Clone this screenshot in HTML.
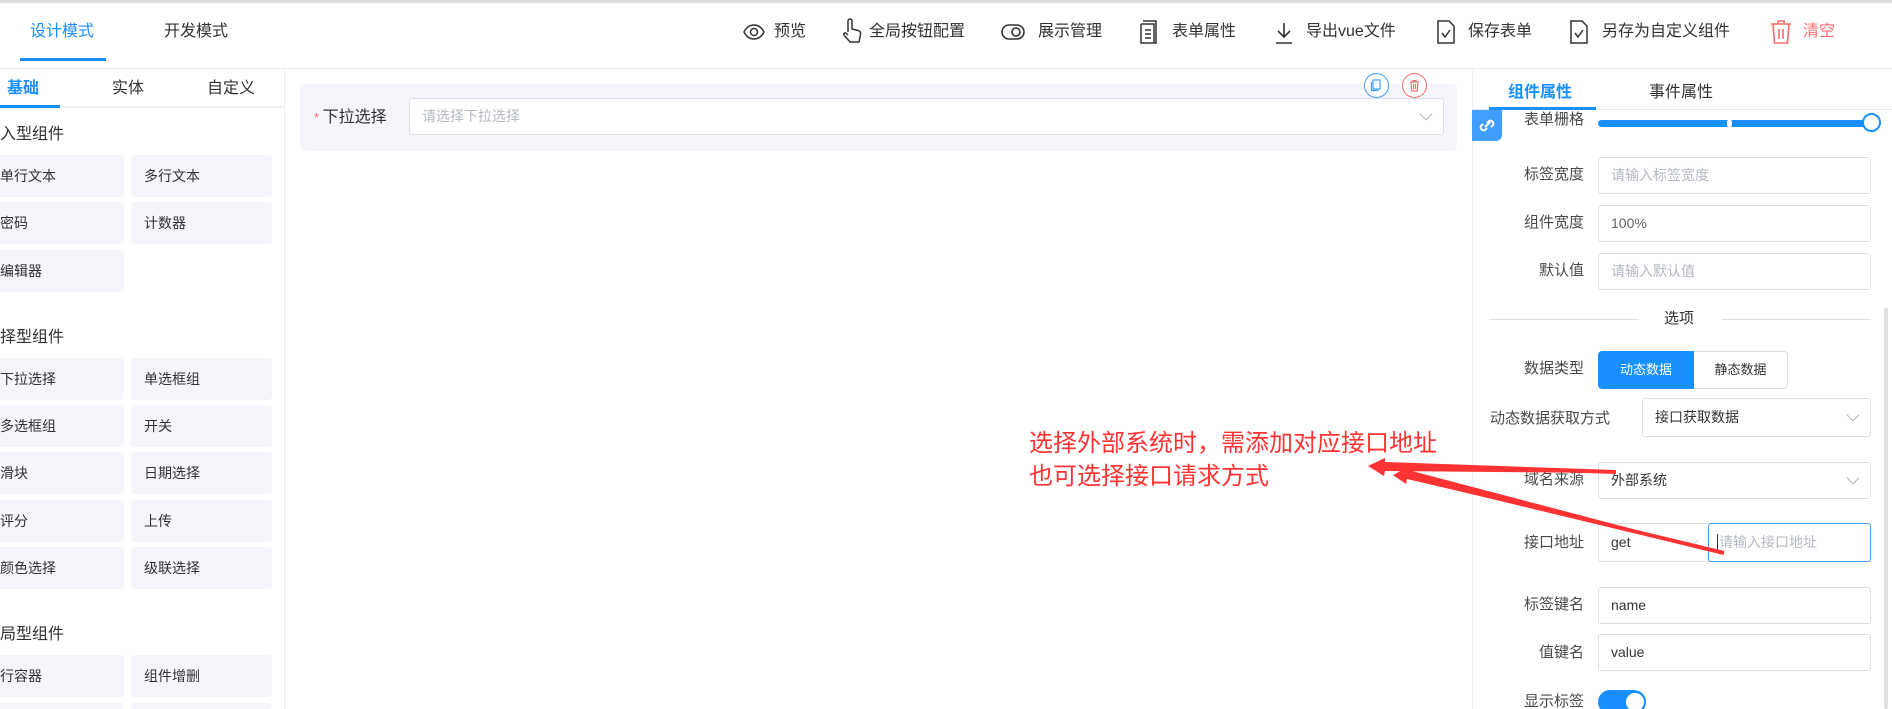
<!DOCTYPE html>
<html><head><meta charset="utf-8"><style>
*{box-sizing:border-box;margin:0;padding:0}
html,body{width:1892px;height:709px;overflow:hidden}
body{background:#fff;font-family:"Liberation Sans","Noto Sans CJK SC",sans-serif;color:#303133}
#w{position:relative;width:1892px;height:709px;overflow:hidden}
.a{position:absolute;white-space:nowrap}
.tb{font-size:16px;color:#303133;top:20px;line-height:24px}
.ic{position:absolute;top:21px}
.item{position:absolute;background:#f5f6fc;border-radius:4px;height:42px;font-size:14px;color:#303133;line-height:42px}
.h{font-size:16px;color:#303133;line-height:20px}
.inp{position:absolute;border:1px solid #dcdfe6;border-radius:3px;height:37px;font-size:14px;line-height:35px;padding-left:12px;color:#606266;background:#fff}
.ph{color:#b4b8c2}
.lbl{position:absolute;font-size:15px;color:#4a4a4a;text-align:right;width:120px;line-height:20px}
.arr{position:absolute;right:12px;top:9px;width:10px;height:10px;border-right:1px solid #aaa;border-bottom:1px solid #aaa;transform:rotate(45deg) scale(.9,.9)}
</style></head><body><div id="w">
<div class="a" style="left:0;top:0;width:1892px;height:3px;background:#dcdcdc"></div>
<div class="a" style="left:0;top:68px;width:1892px;height:1px;background:#e6e6e6"></div>
<div class="a" style="left:30px;top:20px;font-size:16px;color:#1890ff;line-height:24px">设计模式</div>
<div class="a" style="left:20px;top:58px;width:86px;height:3px;background:#1890ff"></div>
<div class="a" style="left:164px;top:20px;font-size:16px;line-height:24px">开发模式</div>

<svg class="ic" style="left:743px" width="22" height="22" viewBox="0 0 22 22" fill="none" stroke="#333" stroke-width="1.5"><path d="M1 11C4 5 8 4 11 4s7 1 10 7c-3 6-7 7-10 7S4 17 1 11z"/><circle cx="11" cy="11" r="3.5"/></svg>
<div class="a tb" style="left:774px">预览</div>
<svg class="ic" style="left:842px;top:18px" width="20" height="26" viewBox="0 0 20 26" fill="none" stroke="#333" stroke-width="1.5"><path d="M6 14V3a2 2 0 014 0v8l6 1.5c2 .5 3 2 2.5 4L17 24H8L2 17c-1-1.5 1-3 2.5-1.5L6 17"/></svg>
<div class="a tb" style="left:869px">全局按钮配置</div>
<svg class="ic" style="left:1001px" width="24" height="22" viewBox="0 0 24 22" fill="none" stroke="#333" stroke-width="1.6"><rect x="1" y="4" width="22" height="14" rx="7"/><circle cx="15" cy="11" r="4"/></svg>
<div class="a tb" style="left:1038px">展示管理</div>
<svg class="ic" style="left:1139px;top:19px" width="20" height="26" viewBox="0 0 20 26" fill="none" stroke="#333" stroke-width="1.5"><path d="M4 2h13v22H2V5"/><path d="M2 5h13v19"/><path d="M6 11h6M6 15h6M6 19h6"/></svg>
<div class="a tb" style="left:1172px">表单属性</div>
<svg class="ic" style="left:1274px" width="20" height="24" viewBox="0 0 20 24" fill="none" stroke="#333" stroke-width="1.6"><path d="M10 2v14M4 10l6 6 6-6M2 22h16"/></svg>
<div class="a tb" style="left:1306px">导出vue文件</div>
<svg class="ic" style="left:1436px;top:19px" width="20" height="26" viewBox="0 0 20 26" fill="none" stroke="#333" stroke-width="1.5"><path d="M2 2h11l5 5v17H2z"/><path d="M6 14l3 4 5-7"/></svg>
<div class="a tb" style="left:1468px">保存表单</div>
<svg class="ic" style="left:1569px;top:19px" width="20" height="26" viewBox="0 0 20 26" fill="none" stroke="#333" stroke-width="1.5"><path d="M2 2h11l5 5v17H2z"/><path d="M6 14l3 4 5-7"/></svg>
<div class="a tb" style="left:1602px">另存为自定义组件</div>
<svg class="ic" style="left:1770px;top:19px" width="22" height="26" viewBox="0 0 22 26" fill="none" stroke="#f56c6c" stroke-width="1.6"><path d="M1 5h20M8 5V2h6v3M3 5l1.5 19h13L19 5M9 10v10M13 10v10"/></svg>
<div class="a tb" style="left:1803px;color:#f56c6c">清空</div>

<div class="a" style="left:284px;top:69px;width:1px;height:640px;background:#ebeef5"></div>
<div class="a" style="left:0;top:106px;width:284px;height:2px;background:#eef0f3"></div>
<div class="a" style="left:0;top:105px;width:60px;height:3px;background:#1890ff"></div>
<div class="a" style="left:7px;top:78px;font-size:16px;font-weight:bold;color:#1890ff;line-height:22px">基础</div>
<div class="a" style="left:112px;top:78px;font-size:16px;line-height:22px">实体</div>
<div class="a" style="left:207px;top:78px;font-size:16px;line-height:22px">自定义</div>

<div class="a h" style="left:-16px;top:125px">输入型组件</div>
<div class="item" style="left:-20px;top:155px;width:144px;padding-left:20px">单行文本</div>
<div class="item" style="left:131px;top:155px;width:141px;padding-left:13px">多行文本</div>
<div class="item" style="left:-20px;top:202px;width:144px;padding-left:20px">密码</div>
<div class="item" style="left:131px;top:202px;width:141px;padding-left:13px">计数器</div>
<div class="item" style="left:-20px;top:250px;width:144px;padding-left:20px">编辑器</div>

<div class="a h" style="left:-16px;top:328px">选择型组件</div>
<div class="item" style="left:-20px;top:358px;width:144px;padding-left:20px">下拉选择</div>
<div class="item" style="left:131px;top:358px;width:141px;padding-left:13px">单选框组</div>
<div class="item" style="left:-20px;top:405px;width:144px;padding-left:20px">多选框组</div>
<div class="item" style="left:131px;top:405px;width:141px;padding-left:13px">开关</div>
<div class="item" style="left:-20px;top:452px;width:144px;padding-left:20px">滑块</div>
<div class="item" style="left:131px;top:452px;width:141px;padding-left:13px">日期选择</div>
<div class="item" style="left:-20px;top:500px;width:144px;padding-left:20px">评分</div>
<div class="item" style="left:131px;top:500px;width:141px;padding-left:13px">上传</div>
<div class="item" style="left:-20px;top:547px;width:144px;padding-left:20px">颜色选择</div>
<div class="item" style="left:131px;top:547px;width:141px;padding-left:13px">级联选择</div>

<div class="a h" style="left:-16px;top:625px">布局型组件</div>
<div class="item" style="left:-20px;top:655px;width:144px;padding-left:20px">行容器</div>
<div class="item" style="left:131px;top:655px;width:141px;padding-left:13px">组件增删</div>
<div class="item" style="left:-20px;top:703px;width:144px;height:6px"></div>
<div class="item" style="left:131px;top:703px;width:141px;height:6px"></div>

<div class="a" style="left:300px;top:84px;width:1157px;height:67px;background:#f5f6fc;border-radius:6px"></div>
<div class="a" style="left:314px;top:107px;font-size:16px;line-height:22px"><span style="color:#f56c6c;font-size:13px">* </span>下拉选择</div>
<div class="inp" style="left:409px;top:98px;width:1035px;padding-left:12px"><span class="ph">请选择下拉选择</span><span class="arr" style="top:10px"></span></div>
<div class="a" style="left:1364px;top:73px;width:25px;height:25px;border:1px solid #409eff;border-radius:50%;background:#fff"><svg width="23" height="23" viewBox="0 0 23 23" fill="none" stroke="#409eff" stroke-width="1.2"><rect x="8" y="6" width="7" height="9"/><path d="M6.5 8v8.5h7"/></svg></div>
<div class="a" style="left:1402px;top:73px;width:25px;height:25px;border:1px solid #f56c6c;border-radius:50%;background:#fff"><svg width="23" height="23" viewBox="0 0 23 23" fill="none" stroke="#f56c6c" stroke-width="1.2"><path d="M7 8h9M10 8V6.5h3V8M8 8l.7 9h5.6L15 8M10.5 10v5M12.5 10v5"/></svg></div>

<div class="a" style="left:1472px;top:69px;width:1px;height:640px;background:#ebeef5"></div>
<div class="a" style="left:1472px;top:109px;width:420px;height:1px;background:#e4e7ed"></div>
<div class="a" style="left:1489px;top:107px;width:107px;height:3px;background:#1890ff"></div>
<div class="a" style="left:1508px;top:82px;font-size:16px;font-weight:bold;color:#1890ff;line-height:22px">组件属性</div>
<div class="a" style="left:1649px;top:82px;font-size:16px;line-height:22px">事件属性</div>
<div class="a" style="left:1472px;top:110px;width:30px;height:31px;background:#409eff;border-radius:0 0 6px 0"><svg width="30" height="31" viewBox="0 0 30 31" fill="none" stroke="#fff" stroke-width="2"><path d="M13 17l5-5M11 14l-2 2a3 3 0 004 4l2-2M19 17l2-2a3 3 0 00-4-4l-2 2"/></svg></div>
<div class="lbl" style="left:1464px;top:110px">表单栅格</div>
<div class="a" style="left:1598px;top:120px;width:274px;height:7px;background:#1890ff;border-radius:4px"></div>
<div class="a" style="left:1727px;top:120px;width:5px;height:7px;background:#fff;border-radius:2px"></div>
<div class="a" style="left:1862px;top:113px;width:19px;height:19px;border:2px solid #1890ff;border-radius:50%;background:#fff"></div>

<div class="lbl" style="left:1464px;top:165px">标签宽度</div>
<div class="inp" style="left:1598px;top:157px;width:273px"><span class="ph">请输入标签宽度</span></div>
<div class="lbl" style="left:1464px;top:213px">组件宽度</div>
<div class="inp" style="left:1598px;top:205px;width:273px">100%</div>
<div class="lbl" style="left:1464px;top:261px">默认值</div>
<div class="inp" style="left:1598px;top:253px;width:273px"><span class="ph">请输入默认值</span></div>

<div class="a" style="left:1489px;top:319px;width:150px;height:1px;background:#dcdfe6"></div>
<div class="a" style="left:1722px;top:319px;width:149px;height:1px;background:#dcdfe6"></div>
<div class="a" style="left:1664px;top:309px;font-size:15px;line-height:20px">选项</div>
<div class="a" style="left:1884px;top:308px;width:4px;height:401px;background:#e0e0e0;border-radius:2px"></div>

<div class="lbl" style="left:1464px;top:359px">数据类型</div>
<div class="a" style="left:1598px;top:351px;width:96px;height:38px;background:#1890ff;border-radius:4px 0 0 4px;color:#fff;font-size:13px;line-height:38px;text-align:center">动态数据</div>
<div class="a" style="left:1694px;top:351px;width:94px;height:38px;border:1px solid #dcdfe6;border-left:none;border-radius:0 4px 4px 0;font-size:13px;line-height:36px;text-align:center;color:#333">静态数据</div>

<div class="a" style="left:1490px;top:409px;font-size:15px;color:#4a4a4a;line-height:20px">动态数据获取方式</div>
<div class="inp" style="left:1642px;top:398px;width:229px;height:39px;line-height:37px;color:#333">接口获取数据<span class="arr" style="top:11px"></span></div>

<div class="lbl" style="left:1464px;top:470px">域名来源</div>
<div class="inp" style="left:1598px;top:462px;width:273px;color:#333">外部系统<span class="arr" style="top:10px"></span></div>

<div class="lbl" style="left:1464px;top:533px">接口地址</div>
<div class="inp" style="left:1598px;top:523px;width:112px;height:39px;line-height:37px;color:#333;border-radius:3px 0 0 3px">get<span class="arr" style="top:11px;border-color:#ccc"></span></div>
<div class="inp" style="left:1708px;top:523px;width:163px;height:39px;line-height:37px;border-color:#409eff;padding-left:8px"><span style="border-left:1px solid #333;padding-left:1px" class="ph">请输入接口地址</span></div>

<div class="lbl" style="left:1464px;top:595px">标签键名</div>
<div class="inp" style="left:1598px;top:587px;width:273px;color:#333">name</div>
<div class="lbl" style="left:1464px;top:643px">值键名</div>
<div class="inp" style="left:1598px;top:634px;width:273px;color:#333">value</div>
<div class="lbl" style="left:1464px;top:692px">显示标签</div>
<div class="a" style="left:1598px;top:690px;width:48px;height:24px;background:#1890ff;border-radius:12px"></div>
<div class="a" style="left:1626px;top:693px;width:18px;height:18px;background:#fff;border-radius:50%"></div>

<div class="a" style="left:1029px;top:429px;font-size:24px;color:#f33;line-height:30px">选择外部系统时，需添加对应接口地址</div>
<div class="a" style="left:1029px;top:462px;font-size:24px;color:#f33;line-height:30px">也可选择接口请求方式</div>
<svg class="a" style="left:0;top:0" width="1892" height="709" viewBox="0 0 1892 709">
<path d="M1616 473 L1385 462 L1385 458 L1368 466 L1384 476 L1385 471 Z" fill="#f33"/>
<path d="M1724 553 L1408 470 L1410 466 L1393 475 L1406 484 L1407 479 Z" fill="#f33"/>
<path d="M1616 472 L1385 464" stroke="#f33" stroke-width="4"/>
<path d="M1724 553 L1405 476" stroke="#f33" stroke-width="4"/>
</svg>
</div></body></html>
